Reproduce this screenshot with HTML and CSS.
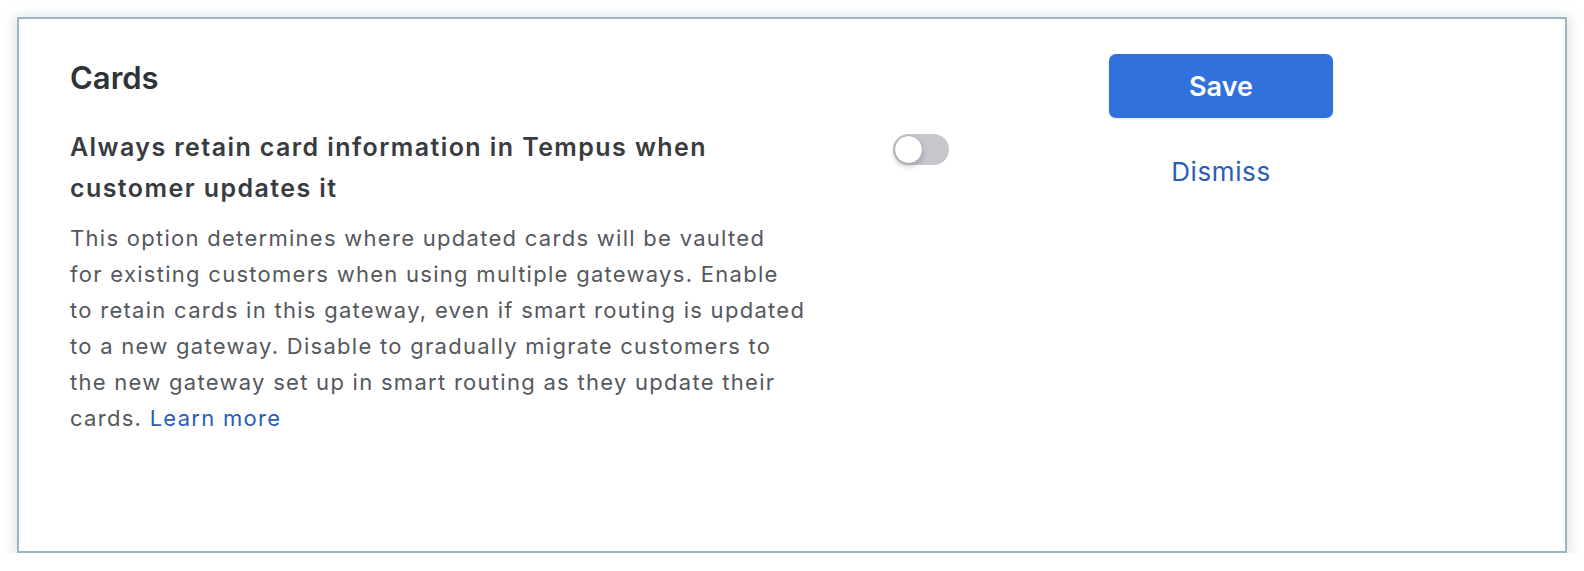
FILE: index.html
```html
<!DOCTYPE html>
<html lang="en">
<head>
<meta charset="utf-8">
<title>Cards settings</title>
<link rel="stylesheet" href="styles.css">
</head>
<body>
<section class="panel">
  <div class="main">
    <h2 class="title">Cards</h2>
    <div class="setting">
      <div class="setting-text">
        <h3 class="setting-name">Always retain card information in Tempus when<br>customer updates it</h3>
        <p class="setting-desc">This option determines where updated cards will be vaulted<br>for existing customers when using multiple gateways. Enable<br>to retain cards in this gateway, even if smart routing is updated<br>to a new gateway. Disable to gradually migrate customers to<br>the new gateway set up in smart routing as they update their<br>cards. <a class="link" href="#">Learn more</a></p>
      </div>
      <div class="toggle-col">
        <span class="toggle" role="switch" aria-checked="false"><span class="knob"></span></span>
      </div>
    </div>
  </div>
  <div class="actions">
    <button class="btn-save" type="button">Save</button>
    <a class="btn-dismiss" href="#">Dismiss</a>
  </div>
</section>
</body>
</html>
```

FILE: styles.css
```css
html, body {
  margin: 0;
  padding: 0;
  background: #ffffff;
}

body {
  padding: 17px 17px 0 17px;
  font-family: Inter, "Noto Sans", "Liberation Sans", sans-serif;
}

.panel {
  box-sizing: border-box;
  width: 1550px;
  height: 536px;
  border: 2px solid #9db2bf;
  background: #ffffff;
  box-shadow: 0 2px 12px 2px rgba(120, 150, 170, 0.28);
  display: flex;
  padding: 35px 0 0 51px;
}

.main {
  display: flex;
  flex-direction: column;
}

.title {
  margin: 4px 0 0 0;
  font-size: 31px;
  line-height: 40px;
  font-weight: 600;
  color: #2f3237;
  letter-spacing: 0;
}

.setting {
  display: flex;
  margin-top: 29px;
}

.setting-text {
  width: 716px;
}

.setting-name {
  margin: 0;
  font-size: 25px;
  line-height: 41px;
  font-weight: 600;
  color: #383b40;
  letter-spacing: 1.42px;
  white-space: nowrap;
}

.setting-desc {
  margin: 11px 0 0 0;
  font-size: 22px;
  line-height: 36px;
  font-weight: 400;
  color: #55585d;
  letter-spacing: 1.28px;
  white-space: nowrap;
}

.link {
  color: #2a5db3;
  text-decoration: none;
}

.toggle-col {
  margin-left: 107px;
  padding-top: 7px;
}

.toggle {
  display: block;
  position: relative;
  width: 56px;
  height: 31px;
  border-radius: 16px;
  background: #c6c7cc;
}

.knob {
  position: absolute;
  left: 1px;
  top: 1px;
  width: 27px;
  height: 27px;
  border-radius: 50%;
  background: #ffffff;
  border: 1px solid #a9aaae;
  box-shadow: 0 3px 5px rgba(0, 0, 0, 0.18);
}

.actions {
  margin-left: 160px;
  width: 224px;
  display: flex;
  flex-direction: column;
  align-items: center;
}

.btn-save {
  width: 224px;
  height: 64px;
  border: none;
  border-radius: 7px;
  background: #3171db;
  color: #ffffff;
  font-family: inherit;
  font-size: 27px;
  font-weight: 600;
  box-shadow: 0 1px 3px rgba(0, 0, 0, 0.12);
}

.btn-dismiss {
  margin-top: 37px;
  font-size: 26px;
  line-height: 34px;
  color: #2a5db3;
  text-decoration: none;
  letter-spacing: 0.6px;
}
```
